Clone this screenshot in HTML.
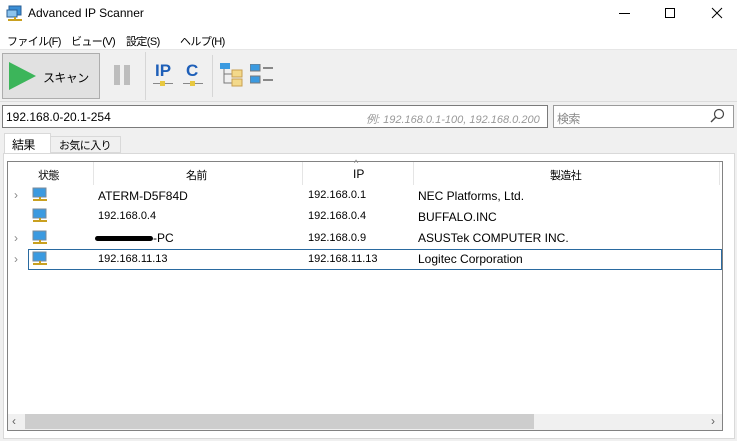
<!DOCTYPE html><html><head><meta charset="utf-8"><style>
*{margin:0;padding:0;box-sizing:border-box}
body{width:737px;height:441px;background:#f0f0f0;font-family:"Liberation Sans","Noto Sans CJK JP",sans-serif;font-size:12px;color:#000;position:relative;overflow:hidden}
.a{position:absolute}
.t{white-space:nowrap}
.m{font-size:11px;letter-spacing:-0.6px}
</style></head><body>
<div class="a" style="left:0;top:0;width:737px;height:50px;background:#fff"></div>
<svg class="a" style="left:6px;top:5px" width="18" height="18"><rect x="3" y="1" width="12" height="9" fill="#3b8fd6" stroke="#2a5f95"/><rect x="1" y="5" width="10" height="7" fill="#8cc4ee" stroke="#2a5f95"/><path d="M2 15h14M9 12v3" stroke="#c9a020" stroke-width="2"/></svg>
<div class="a t" style="left:28px;top:6px;font-size:12px">Advanced IP Scanner</div>
<div class="a" style="left:619px;top:13px;width:11px;height:1px;background:#000"></div>
<div class="a" style="left:665px;top:8px;width:10px;height:10px;border:1px solid #000"></div>
<svg class="a" style="left:711px;top:7px" width="12" height="12"><path d="M1 1L11 11M11 1L1 11" stroke="#000"/></svg>
<div class="a t m" style="left:7px;top:33px">ファイル(F)</div>
<div class="a t m" style="left:71px;top:33px">ビュー(V)</div>
<div class="a t m" style="left:126px;top:33px">設定(S)</div>
<div class="a t m" style="left:180px;top:33px">ヘルプ(H)</div>
<div class="a" style="left:0;top:49px;width:737px;height:1px;background:#e6e6e6"></div>
<div class="a" style="left:2px;top:53px;width:98px;height:46px;background:#e1e1e1;border:1px solid #adadad"></div>
<svg class="a" style="left:8px;top:61px" width="30" height="30"><path d="M1 1L28 15L1 29Z" fill="#3cb55a"/></svg>
<div class="a t m" style="left:43px;top:69px;font-size:12px">スキャン</div>
<div class="a" style="left:114px;top:65px;width:6px;height:20px;background:#bdbdbd"></div>
<div class="a" style="left:124px;top:65px;width:6px;height:20px;background:#bdbdbd"></div>
<div class="a" style="left:145px;top:52px;width:1px;height:48px;background:#d6d6d6"></div>
<div class="a t" style="left:155px;top:61px;font-size:17px;font-weight:bold;color:#1e5fb8">IP</div>
<div class="a" style="left:153px;top:83px;width:20px;height:1px;background:#888"></div><div class="a" style="left:160px;top:81px;width:5px;height:5px;background:#e8c840"></div>
<div class="a t" style="left:186px;top:61px;font-size:17px;font-weight:bold;color:#1e5fb8">C</div>
<div class="a" style="left:183px;top:83px;width:20px;height:1px;background:#888"></div><div class="a" style="left:190px;top:81px;width:5px;height:5px;background:#e8c840"></div>
<div class="a" style="left:212px;top:55px;width:1px;height:42px;background:#d6d6d6"></div>
<svg class="a" style="left:220px;top:63px" width="24" height="25"><rect x="0" y="0" width="10" height="6" fill="#3b9ae0"/><path d="M4 6v14h8M4 11h8" stroke="#777" fill="none"/><rect x="12" y="7" width="10" height="7" fill="#f3d98a" stroke="#c9a050"/><rect x="12" y="16" width="10" height="7" fill="#f3d98a" stroke="#c9a050"/></svg>
<svg class="a" style="left:250px;top:64px" width="24" height="22"><rect x="0" y="0" width="10" height="7" fill="#3b9ae0" stroke="#777"/><rect x="0" y="12" width="10" height="7" fill="#3b9ae0" stroke="#777"/><path d="M13 4h10M13 16h10" stroke="#888" stroke-width="2"/></svg>
<div class="a" style="left:0;top:101px;width:737px;height:1px;background:#dcdcdc"></div>
<div class="a" style="left:2px;top:105px;width:546px;height:23px;background:#fff;border:1px solid #7a7a7a"></div>
<div class="a t" style="left:6px;top:110px;font-size:12px">192.168.0-20.1-254</div>
<div class="a t" style="left:366px;top:111px;font-size:11px;font-style:italic;color:#999">例: 192.168.0.1-100, 192.168.0.200</div>
<div class="a" style="left:553px;top:105px;width:181px;height:23px;background:#fff;border:1px solid #9a9a9a"></div>
<div class="a t m" style="left:557px;top:110px;color:#888;font-size:12px">検索</div>
<svg class="a" style="left:710px;top:108px" width="16" height="16"><circle cx="9" cy="6" r="4.5" fill="none" stroke="#444" stroke-width="1.2"/><path d="M6 9L1 14" stroke="#444" stroke-width="1.4"/></svg>
<div class="a" style="left:50px;top:136px;width:71px;height:17px;background:#f0f0f0;border:1px solid #d9d9d9"></div>
<div class="a t m" style="left:59px;top:137px">お気に入り</div>
<div class="a" style="left:4px;top:133px;width:47px;height:21px;background:#fff;border:1px solid #d9d9d9;border-bottom:none"></div>
<div class="a t m" style="left:12px;top:136px;font-size:12px">結果</div>
<div class="a" style="left:3px;top:153px;width:732px;height:286px;background:#fff;border:1px solid #d9d9d9"></div>
<div class="a" style="left:7px;top:161px;width:716px;height:270px;background:#fff;border:1px solid #828282"></div>
<div class="a" style="left:93px;top:162px;width:1px;height:23px;background:#e5e5e5"></div>
<div class="a" style="left:302px;top:162px;width:1px;height:23px;background:#e5e5e5"></div>
<div class="a" style="left:413px;top:162px;width:1px;height:23px;background:#e5e5e5"></div>
<div class="a" style="left:719px;top:162px;width:1px;height:23px;background:#e5e5e5"></div>
<div class="a t m" style="left:38px;top:167px">状態</div>
<div class="a t m" style="left:186px;top:167px">名前</div>
<div class="a t" style="left:353px;top:167px">IP</div>
<div class="a t" style="left:354px;top:158px;font-size:9px;color:#888">^</div>
<div class="a t m" style="left:550px;top:167px">製造社</div>
<div class="a" style="left:28px;top:249px;width:694px;height:21px;border:1px solid #2a6aa0"></div>
<div class="a t" style="left:14px;top:188px;color:#888">›</div>
<div class="a t" style="left:14px;top:231px;color:#888">›</div>
<div class="a t" style="left:14px;top:252px;color:#888">›</div>
<svg class="a" style="left:32px;top:187px" width="16" height="86"><g id="m"><rect x="1" y="1" width="13" height="9" fill="#3b9ae0" stroke="#7a8a9a"/><path d="M1 13h14M8 10v4" stroke="#c9a020" stroke-width="2"/></g><use href="#m" y="21"/><use href="#m" y="43"/><use href="#m" y="64"/></svg>
<div class="a t" style="left:98px;top:189px">ATERM-D5F84D</div>
<div class="a t" style="left:98px;top:210px;font-size:11px">192.168.0.4</div>
<div class="a" style="left:95px;top:236px;width:58px;height:5px;background:#000;border-radius:3px"></div>
<div class="a t" style="left:153px;top:231px">-PC</div>
<div class="a t" style="left:98px;top:253px;font-size:11px">192.168.11.13</div>
<div class="a t" style="left:308px;top:189px;font-size:11px">192.168.0.1</div>
<div class="a t" style="left:308px;top:210px;font-size:11px">192.168.0.4</div>
<div class="a t" style="left:308px;top:232px;font-size:11px">192.168.0.9</div>
<div class="a t" style="left:308px;top:253px;font-size:11px">192.168.11.13</div>
<div class="a t" style="left:418px;top:189px">NEC Platforms, Ltd.</div>
<div class="a t" style="left:418px;top:210px">BUFFALO.INC</div>
<div class="a t" style="left:418px;top:231px">ASUSTek COMPUTER INC.</div>
<div class="a t" style="left:418px;top:252px">Logitec Corporation</div>
<div class="a" style="left:8px;top:414px;width:714px;height:16px;background:#f0f0f0"></div>
<div class="a" style="left:25px;top:414px;width:509px;height:15px;background:#cdcdcd"></div>
<div class="a t" style="left:12px;top:414px;font-size:12px;color:#606060">‹</div>
<div class="a t" style="left:711px;top:414px;font-size:12px;color:#606060">›</div>
</body></html>
